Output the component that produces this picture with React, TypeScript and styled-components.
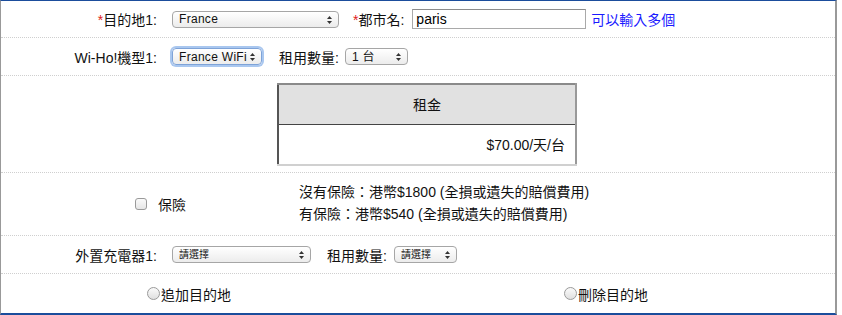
import React from "react";
import styled, { createGlobalStyle, css } from "styled-components";

const GlobalStyle = createGlobalStyle`
  body {
    margin: 0;
    background: #fff;
    font-family: "Liberation Sans", "Noto Sans CJK TC", sans-serif;
    font-size: 14px;
    color: #111;
  }
`;

const Frame = styled.div`
  width: 837px;
  box-sizing: border-box;
  border-left: 1px solid #999;
  border-right: 2px solid #999;
  border-top: 1px solid #1b4d9c;
  border-bottom: 2px solid #1b4d9c;
`;

const Row = styled.div<{ $h: number }>`
  display: flex;
  align-items: center;
  height: ${(p) => p.$h}px;
  border-bottom: 1px dotted #cfcfcf;
  box-sizing: border-box;
  &:last-child {
    border-bottom: none;
  }
`;

const Label = styled.div`
  width: 156px;
  text-align: right;
  white-space: nowrap;
  margin-right: 15px;
`;

const InlineLabel = styled.span<{ $ml: number; $mr: number }>`
  margin-left: ${(p) => p.$ml}px;
  margin-right: ${(p) => p.$mr}px;
  white-space: nowrap;
`;

const Star = styled.span`
  color: #e02020;
`;

const SelectWrap = styled.span<{ $w: number; $focus?: boolean }>`
  position: relative;
  display: inline-flex;
  align-items: center;
  width: ${(p) => p.$w}px;
  height: 17px;
  box-sizing: border-box;
  border: 1px solid #a6a6a6;
  border-radius: 4px;
  background: linear-gradient(#ffffff, #ececec);
  ${(p) =>
    p.$focus &&
    css`
      border-color: #7ea3d8;
      box-shadow: 0 0 0 2px #a9c7ef;
    `}
`;

const NativeSelect = styled.select<{ $small?: boolean }>`
  appearance: none;
  -webkit-appearance: none;
  border: none;
  background: transparent;
  width: 100%;
  height: 100%;
  padding: 0 10px 0 6px;
  font-family: "Liberation Sans", "Noto Sans CJK TC", sans-serif;
  font-size: ${(p) => (p.$small ? "10px" : "12px")};
  letter-spacing: ${(p) => (p.$small ? "0" : "0.3px")};
  color: #111;
  outline: none;
`;

const Arrows = styled.svg`
  position: absolute;
  right: 6px;
  top: 4px;
  pointer-events: none;
`;

const TextInput = styled.input`
  width: 174px;
  height: 20px;
  box-sizing: border-box;
  border: 1px solid #a9a9a9;
  border-top-color: #8c8c8c;
  padding: 0 3px;
  font-family: "Liberation Sans", "Noto Sans CJK TC", sans-serif;
  font-size: 14px;
  margin-right: 5px;
  outline: none;
`;

const Hint = styled.a`
  color: #1a1aff;
  text-decoration: none;
  white-space: nowrap;
`;

const PriceTable = styled.table`
  margin-left: 276px;
  width: 300px;
  border-collapse: collapse;
  border-top: 2px solid #8a8a8a;
  border-left: 2px solid #555;
  border-right: 2px solid #999;
  border-bottom: 2px solid #d0d0d0;
`;

const HeadCell = styled.th`
  height: 37px;
  background: #e1e1e1;
  font-weight: normal;
  text-align: center;
  border-bottom: 1px solid #444;
`;

const PriceCell = styled.td`
  height: 37px;
  text-align: right;
  padding-right: 10px;
`;

const CheckBox = styled.span`
  display: inline-block;
  width: 10px;
  height: 10px;
  border: 1px solid #9a9a9a;
  border-radius: 3px;
  background: linear-gradient(#fafafa, #e6e6e6);
  margin-left: 134px;
  margin-right: 11px;
`;

const InsuranceName = styled.span`
  width: 141px;
`;

const Notes = styled.div`
  line-height: 22px;
  margin-top: -3px;
`;

const Radio = styled.span`
  display: inline-block;
  width: 13px;
  height: 13px;
  box-sizing: border-box;
  border: 1px solid #9a9a9a;
  border-radius: 50%;
  background: linear-gradient(#fafafa, #e0e0e0);
  margin-right: 1px;
`;

const RadioOption = styled.span<{ $w: number }>`
  display: inline-flex;
  align-items: center;
  width: ${(p) => p.$w}px;
  white-space: nowrap;
`;

const Spacer = styled.span<{ $w: number }>`
  display: inline-block;
  width: ${(p) => p.$w}px;
`;

type SelectProps = {
  width: number;
  value: string;
  focus?: boolean;
  small?: boolean;
};

const Select: React.FC<SelectProps> = ({ width, value, focus, small }) => (
  <SelectWrap $w={width} $focus={focus}>
    <NativeSelect $small={small} defaultValue={value}>
      <option>{value}</option>
    </NativeSelect>
    <Arrows width="5" height="8" viewBox="0 0 5 8">
      <path d="M2.5 0 L5 3 H0 Z" fill="#333" />
      <path d="M2.5 8 L5 5 H0 Z" fill="#333" />
    </Arrows>
  </SelectWrap>
);

const App: React.FC = () => {
  return (
    <>
      <GlobalStyle />
      <Frame>
        <Row $h={37}>
          <Label>
            <Star>*</Star>目的地1:
          </Label>
          <Select width={167} value="France" />
          <InlineLabel $ml={14} $mr={8}>
            <Star>*</Star>都市名:
          </InlineLabel>
          <TextInput defaultValue="paris" />
          <Hint href="#">可以輸入多個</Hint>
        </Row>
        <Row $h={38}>
          <Label>Wi-Ho!機型1:</Label>
          <Select width={90} value="France WiFi" focus />
          <InlineLabel $ml={17} $mr={6}>租用數量:</InlineLabel>
          <Select width={63} value="1 台" />
        </Row>
        <Row $h={97}>
          <PriceTable>
            <thead>
              <tr>
                <HeadCell>租金</HeadCell>
              </tr>
            </thead>
            <tbody>
              <tr>
                <PriceCell>$70.00/天/台</PriceCell>
              </tr>
            </tbody>
          </PriceTable>
        </Row>
        <Row $h={63}>
          <CheckBox />
          <InsuranceName>保險</InsuranceName>
          <Notes>
            <div>沒有保險：港幣$1800 (全損或遺失的賠償費用)</div>
            <div>有保險：港幣$540 (全損或遺失的賠償費用)</div>
          </Notes>
        </Row>
        <Row $h={38}>
          <Label>外置充電器1:</Label>
          <Select width={139} value="請選擇" small />
          <InlineLabel $ml={16} $mr={7}>租用數量:</InlineLabel>
          <Select width={63} value="請選擇" small />
        </Row>
        <Row $h={39}>
          <Spacer $w={146} />
          <RadioOption $w={417}>
            <Radio />
            追加目的地
          </RadioOption>
          <RadioOption $w={120}>
            <Radio />
            刪除目的地
          </RadioOption>
        </Row>
      </Frame>
    </>
  );
};

export default App;
